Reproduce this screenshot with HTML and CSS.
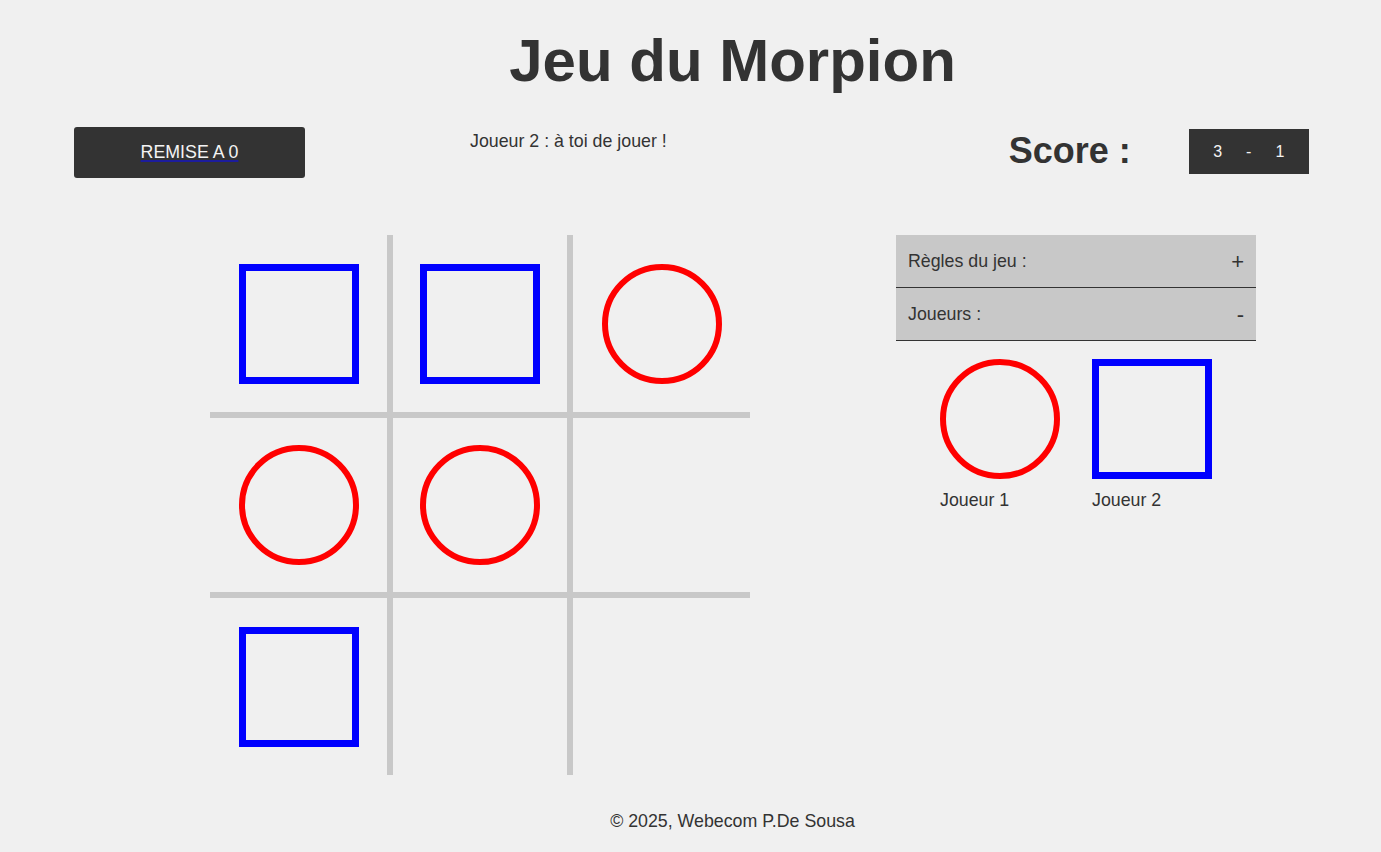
FILE: index.html
```html
<!DOCTYPE html>
<html lang="fr">
<head>
<meta charset="utf-8">
<title>Jeu du Morpion</title>
<link rel="stylesheet" href="styles.css">
</head>
<body>
<h1 class="title">Jeu du Morpion</h1>
<div class="topbar">
  <button class="reset"><a href="#">REMISE A 0</a></button>
  <p class="status">Joueur 2 : à toi de jouer !</p>
  <div class="score">
    <h2 class="score-label">Score :</h2>
    <div class="score-box"><span>3</span><span>-</span><span>1</span></div>
  </div>
</div>
<main class="main">
  <div class="board">
    <div class="cell c1 r1"><span class="sq"></span></div>
    <div class="cell c2 r1"><span class="sq"></span></div>
    <div class="cell c3 r1"><span class="ci"></span></div>
    <div class="cell c1 r2"><span class="ci"></span></div>
    <div class="cell c2 r2"><span class="ci"></span></div>
    <div class="cell c3 r2"></div>
    <div class="cell c1 r3"><span class="sq"></span></div>
    <div class="cell c2 r3"></div>
    <div class="cell c3 r3"></div>
  </div>
  <aside class="panel">
    <div class="acc-head"><span>Règles du jeu :</span><span class="sign">+</span></div>
    <div class="acc-head"><span>Joueurs :</span><span class="sign">-</span></div>
    <div class="players">
      <div class="player"><span class="ci"></span><span class="pname">Joueur 1</span></div>
      <div class="player"><span class="sq"></span><span class="pname">Joueur 2</span></div>
    </div>
  </aside>
</main>
<footer class="footer">© 2025, Webecom P.De Sousa</footer>
</body>
</html>
```

FILE: styles.css
```css
* { box-sizing: border-box; }
html, body {
  margin: 0;
  padding: 0;
  background: #f0f0f0;
  color: #333;
  font-family: "Liberation Sans", Arial, sans-serif;
  font-size: 17.8px;
}
.title {
  margin: 26px 0 0 0;
  padding-left: 84px;
  text-align: center;
  font-size: 60px;
  line-height: 69px;
  font-weight: bold;
}
.topbar {
  display: flex;
  align-items: flex-start;
  margin-top: 32px;
  padding-left: 74px;
  height: 108px;
}
.reset {
  width: 231px;
  height: 51px;
  background: #333;
  border: none;
  border-radius: 3px;
  padding: 0;
  font-family: inherit;
  font-size: 17.8px;
  display: flex;
  align-items: center;
  justify-content: center;
}
.reset a {
  color: #f4f4f4;
  text-decoration: underline;
  text-decoration-color: #1c1c9c;
  text-underline-offset: 2px;
  text-decoration-thickness: 2px;
}
.status {
  margin: 4px 0 0 165px;
  line-height: 20.5px;
}
.score {
  display: flex;
  align-items: flex-start;
  margin-left: 342px;
}
.score-label {
  margin: 3px 0 0 0;
  font-size: 36px;
  line-height: 41.4px;
  font-weight: bold;
}
.score-box {
  margin: 2px 0 0 58px;
  width: 120px;
  height: 45px;
  background: #333;
  color: #f4f4f4;
  font-size: 16px;
  display: flex;
  align-items: center;
  justify-content: center;
  gap: 24px;
}
.main {
  display: flex;
  align-items: flex-start;
  padding-left: 210px;
  gap: 146px;
}
.board {
  display: grid;
  grid-template-columns: repeat(3, 180px);
  grid-template-rows: repeat(3, 180px);
  width: 540px;
  height: 540px;
}
.cell {
  display: flex;
  align-items: center;
  justify-content: center;
  border: 0 solid #c8c8c8;
}
.c1 { border-right-width: 3px; }
.c2 { border-left-width: 3px; border-right-width: 3px; }
.c3 { border-left-width: 3px; }
.r1 { border-bottom-width: 3px; }
.r2 { border-top-width: 3px; border-bottom-width: 3px; }
.r3 { border-top-width: 3px; }
.sq {
  display: block;
  width: 120px;
  height: 120px;
  border: 7px solid #0000ff;
  flex: none;
}
.ci {
  display: block;
  width: 120px;
  height: 120px;
  border: 6px solid #ff0000;
  border-radius: 50%;
  flex: none;
}
.panel {
  width: 360px;
}
.acc-head {
  height: 53px;
  background: #c8c8c8;
  border-bottom: 1px solid #333;
  display: flex;
  align-items: center;
  justify-content: space-between;
  padding: 1px 12px 0 12px;
}
.sign {
  font-size: 22px;
}
.players {
  display: flex;
  justify-content: center;
  gap: 32px;
  padding-top: 18px;
}
.player {
  display: flex;
  flex-direction: column;
  align-items: flex-start;
}
.pname {
  margin-top: 11px;
  line-height: 20.5px;
}
.footer {
  margin-top: 36px;
  padding-left: 84px;
  text-align: center;
  line-height: 20.5px;
}
```
